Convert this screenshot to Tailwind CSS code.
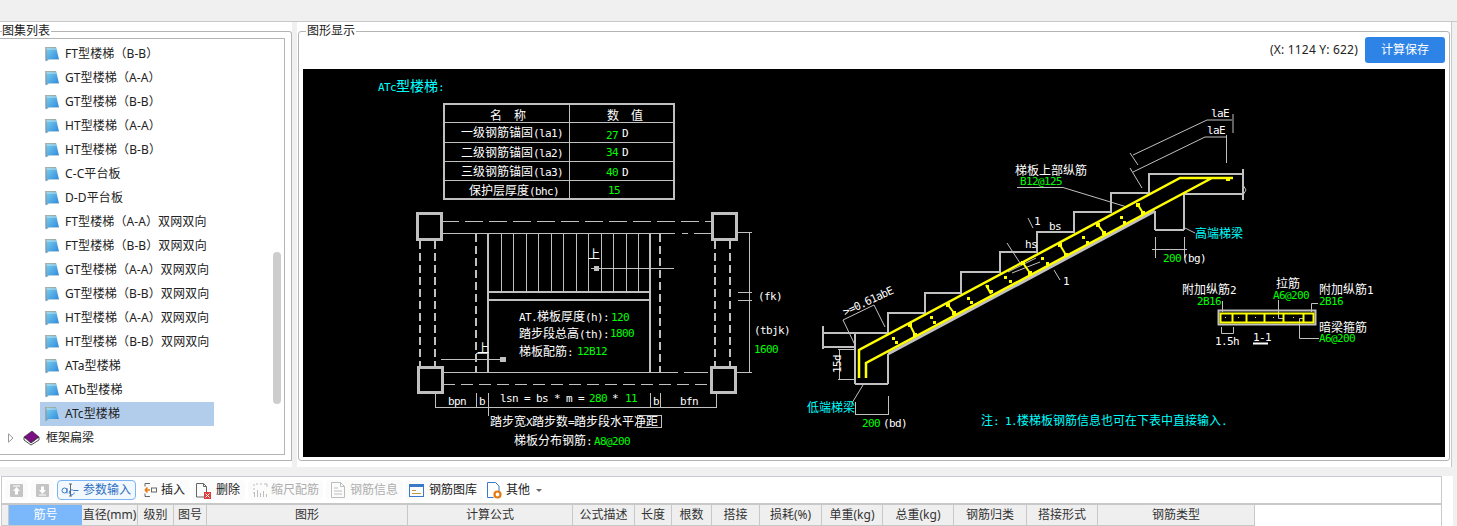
<!DOCTYPE html>
<html lang="zh-CN">
<head>
    <meta charset="UTF-8">
    <title>图形显示</title>
    <script src="https://cdn.jsdelivr.net/npm/@tailwindcss/browser@4"></script>
</head>
<body class="w-[1457px] h-[526px] overflow-hidden bg-[#f0f0f0] text-[12px] text-[#222] font-['Noto_Sans','Noto_Sans_CJK_SC',sans-serif]">
    <!-- shared icons -->
    <svg class="absolute w-0 h-0">
        <defs>
            <linearGradient id="noteFill" x1="0" y1="0" x2="1" y2="1">
                <stop offset="0" stop-color="#7fd4ee"/>
                <stop offset="1" stop-color="#2a86dc"/>
            </linearGradient>
        </defs>
        <symbol id="note" viewBox="0 0 15 16">
            <path d="M1 1h10l.8 3 2.200 9.500H4L1 15z" fill="url(#noteFill)"/>
            <path d="M1 1v14" stroke="#8a9aa2" stroke-width="1.400"/>
            <path d="M1 1.500h10" stroke="#b9a77c" stroke-width="1" stroke-dasharray="1 .6"/>
            <path d="M1 3h10.300" stroke="#d8e6ea" stroke-width=".8"/>
            <path d="M1.500 15l2.500-1.500h10" stroke="#b4d0de" fill="none"/>
        </symbol>
    </svg>

    <div class="h-[21px]"></div>

    <div class="flex h-[446px] border-t border-[#c8c8c8]">
        <!-- left panel -->
        <div class="relative w-[292px] bg-white pt-[9px]">
            <span class="absolute left-[2px] top-[1px] bg-white pr-px text-[12px] leading-[16px]">图集列表</span>
            <div class="h-[430px] border border-l-0 border-[#b4b4b4] rounded-tr-[3px] pt-[6px] pr-[6px]">
                <div class="relative h-[417px] border border-l-0 border-[#b4b4b4] pt-[3px]" id="tree">
                    <div class="absolute left-[273px] top-[213px] w-[8px] h-[152px] rounded-[4px] bg-[#cdcdcd]"></div>
                </div>
            </div>
        </div>

        <!-- right panel -->
        <div class="w-[5px]"></div>
        <div class="relative w-[1155px] bg-white border-r border-[#c8c8c8] pt-[9px] pl-px">
            <span class="absolute left-[9px] top-px bg-white px-px text-[12px] leading-[16px]">图形显示</span>
            <div class="w-[1152px] h-[430px] border border-[#b4b4b4] rounded-[3px] pt-[5px] px-[4px]">
                <div class="flex items-center justify-end h-[26px] gap-[7px]">
                    <span class="text-[12px] tracking-[.2px]">(X: 1124 Y: 622)</span>
                    <button class="w-[80px] h-[26px] rounded-[3px] bg-[#2e84e6] text-white text-[12px]">计算保存</button>
                </div>
                <div class="mt-[6px]">
                    <svg id="cad" class="block" width="1142" height="388" viewBox="303 69 1142 388" style="background:#000" font-family="'DejaVu Sans Mono','Noto Sans CJK SC',monospace" font-size="10">
                        <g fill="none" stroke="#c0c0c0" stroke-width="1" shape-rendering="crispEdges">
                            <!-- table -->
                            <rect x="444" y="103.500" width="230" height="95.500" stroke-width="2"/>
                            <path d="M569.500 103v96M444 122.500h230M444 142.500h230M444 161.500h230M444 180.500h230"/>
                            <!-- columns -->
                            <g stroke-width="3">
                                <rect x="417" y="213" width="24" height="26"/>
                                <rect x="712" y="213" width="24" height="26"/>
                                <rect x="418" y="367" width="24" height="25"/>
                                <rect x="711" y="367" width="24" height="25"/>
                            </g>
                            <g stroke-width="2" stroke-dasharray="8 4">
                                <path d="M420 241v125M435 241v125M715 241v125M730 241v125M476 234v138M660 234v138"/>
                            </g>
                            <path d="M441 221.500h270" stroke-dasharray="18 6"/>
                            <path d="M441 233.500h234M682 233.500h6M694 233.500h17M443 372.500h235M684 372.500h24"/>
                            <path d="M443 384.500h266" stroke-dasharray="12 6"/>
                            <path d="M488 233v139M650 233v139" stroke-width="2"/>
                            <path d="M501.500 233v59M513.500 233v59M526 233v59M538.500 233v59M551 233v59M563.500 233v59M576 233v59M588.500 233v59M601 233v59M613.500 233v59M626 233v59M638.500 233v59"/>
                            <path d="M488 292h162M488 300h162" stroke-width="2"/>
                            <path d="M591 268.500h83M441 359.500h64M476 353.500h12"/>
                            <!-- plan dimensions -->
                            <path d="M435 407.500h282M435.500 393v15M476.500 393v15M488.500 393v23M650.500 393v15M660.500 393v15M716.500 393v15" />
                            <path d="M749.500 232v140M738 292.500h14M738 300.500h14M736 372.500h16M736 232.500h16"/>
                            <rect x="637.500" y="415.500" width="24" height="12"/>
                            <!-- section outline -->
                            <path d="M823 332.500h65v-20h37v-20h36v-21h39v-19.500h37v-20h37v-20h37v-19h38v-19.500h94" stroke-width="2"/>
                            <path d="M1243 169v31M1184 194h59M1184 194v36M1155 230h29M1155 211v19M888 354v30M855 384h33M855 332v52M823 347h32M823 326v23" stroke-width="2"/>
                            <path d="M1155 211L888 354" stroke-width="3" shape-rendering="auto"/>
                        </g>
                        <!-- thin leaders -->
                        <g fill="none" stroke="#c0c0c0" stroke-width="1">
                            <path d="M1133 155L1207 120H1232M1233 114V133M1133 172L1205 137H1226M1226.500 135V163M1130 153L1138 165M1130 168L1142 188"/>
                            <path d="M1017 187.500H1063L1127 207M1028 218L1033 228M1007 243L1020 263M1012 273L1040 262M1008 272L1036 258M1183 227L1195 233"/>
                            <path d="M1155.500 237V258M1184.500 237V258M1152 249.500H1187"/>
                            <path d="M1243 185l3 5-3 5"/>
                            <path d="M843 320L874 305L885 327M843 320L855 345M839.500 349V379M838 349.500H855M838 379.500H855M863 385L852 403M855.500 402V415M888.500 396V415M855 414.500H888"/>
                            <path d="M1054 270l6 10"/>
                            <path d="M1222.500 301V312M1318 303.500H1311.500V312M1278.500 300V318.500H1283M1319 338.500H1299.500V318.500H1303M1221.500 327V333.500H1233.500V327"/>
                            <rect x="1218.500" y="310.500" width="97" height="14" stroke-width="2"/>
                        </g>
                        <!-- rebar -->
                        <g fill="none" stroke="#ffff00" stroke-width="2">
                            <path d="M859 378V350L1180 178H1233M866 378V363L1212 178" stroke-width="2.500"/>
                            <path d="M910 325l5 10M948 305l6 8M986 285l5 9M1023 263l7 10M1060 245l6 10M1098 225l6 8M1138 205l5 8"/>
                            <rect x="1220.500" y="313.500" width="93" height="9"/>
                            <path d="M1232.500 313v10M1246.500 313v10M1264.500 313v10M1283.500 313v10M1303.500 313v10"/>
                        </g>
                        <g fill="#ffff00">
                            <rect x="892" y="337" width="3" height="3"/><rect x="895" y="341" width="3" height="3"/>
                            <rect x="930" y="316" width="3" height="3"/><rect x="933" y="321" width="3" height="3"/>
                            <rect x="967" y="297" width="3" height="3"/><rect x="970" y="301" width="3" height="3"/>
                            <rect x="986" y="285" width="3" height="3"/><rect x="990" y="290" width="3" height="3"/>
                            <rect x="1004" y="276" width="3" height="3"/><rect x="1009" y="280" width="3" height="3"/>
                            <rect x="1041" y="257" width="3" height="3"/><rect x="1046" y="262" width="3" height="3"/>
                            <rect x="1082" y="236" width="3" height="3"/><rect x="1086" y="241" width="3" height="3"/>
                            <rect x="1120" y="216" width="3" height="3"/><rect x="1123" y="221" width="3" height="3"/>
                            <!-- stirrup ends -->
                            <rect x="908" y="323" width="4" height="4"/><rect x="913" y="333" width="4" height="4"/>
                            <rect x="946" y="303" width="4" height="4"/><rect x="952" y="311" width="4" height="4"/>
                            <rect x="1021" y="261" width="4" height="4"/><rect x="1028" y="271" width="4" height="4"/>
                            <rect x="1058" y="243" width="4" height="4"/><rect x="1064" y="253" width="4" height="4"/>
                            <rect x="1096" y="223" width="4" height="4"/><rect x="1102" y="231" width="4" height="4"/>
                            <rect x="1136" y="203" width="4" height="4"/><rect x="1141" y="211" width="4" height="4"/>
                            <rect x="1226" y="178" width="4" height="3"/>
                            <!-- section dots -->
                            <rect x="1238" y="317" width="1" height="1"/><rect x="1255" y="317" width="1" height="1"/><rect x="1273" y="317" width="1" height="1"/><rect x="1293" y="317" width="1" height="1"/><rect x="1225" y="317" width="1" height="1"/>
                        </g>
                        <!-- arrow heads -->
                        <g fill="#c0c0c0"><rect x="594" y="266" width="5" height="5"/><rect x="500" y="357" width="6" height="5"/></g>

                        <!-- labels, the script sizes the runs -->
                        <g fill="#00ffff">
                            <text x="378" y="91" data-cjk="14">ATc型楼梯:</text>
                            <text x="1195" y="238">高端梯梁</text>
                            <text x="807" y="412">低端梯梁</text>
                            <text x="981" y="425">注: 1.楼梯板钢筋信息也可在下表中直接输入.</text>
                        </g>
                        <g fill="#ffffff">
                            <text x="490" y="120">名　称</text>
                            <text x="607" y="120">数　值</text>
                            <text x="461" y="137">一级钢筋锚固(la1)</text>
                            <text x="461" y="157">二级钢筋锚固(la2)</text>
                            <text x="461" y="176">三级钢筋锚固(la3)</text>
                            <text x="469" y="195">保护层厚度(bhc)</text>
                            <text x="622" y="137">D</text>
                            <text x="622" y="156">D</text>
                            <text x="622" y="176">D</text>
                            <text x="588" y="259">上</text>
                            <text x="477" y="353">上</text>
                            <text x="519" y="321">AT.梯板厚度(h):</text>
                            <text x="519" y="338">踏步段总高(th):</text>
                            <text x="519" y="356">梯板配筋:</text>
                            <text x="448" y="405">bpn</text>
                            <text x="479" y="405">b</text>
                            <text x="500" y="402">lsn = bs * m =</text>
                            <text x="612" y="402">*</text>
                            <text x="653" y="405">b</text>
                            <text x="680" y="405">bfn</text>
                            <text x="758" y="300">(fk)</text>
                            <text x="754" y="334">(tbjk)</text>
                            <text x="490" y="426">踏步宽X踏步数=踏步段水平净距</text>
                            <text x="514" y="445">梯板分布钢筋:</text>
                            <text x="1211" y="117">laE</text>
                            <text x="1207" y="134">laE</text>
                            <text x="1015" y="175">梯板上部纵筋</text>
                            <text x="1049" y="230">bs</text>
                            <text x="1025" y="248">hs</text>
                            <text x="1182" y="262">(bg)</text>
                            <text x="883" y="427">(bd)</text>
                            <text x="1182" y="294">附加纵筋2</text>
                            <text x="1276" y="288">拉筋</text>
                            <text x="1319" y="294">附加纵筋1</text>
                            <text x="1319" y="332">暗梁箍筋</text>
                            <text x="1215" y="345">1.5h</text>
                            <text x="1253" y="341">1-1</text>
                            <text x="1034" y="225">1</text>
                            <text x="1063" y="285">1</text>
                            <text transform="translate(845 316) rotate(-25)">&gt;=0.61abE</text>
                            <text transform="translate(841 373) rotate(-90)">15d</text>
                        </g>
                        <path d="M1253 343.500h15" stroke="#fff" stroke-width="2"/>
                        <g fill="#00ff00">
                            <text x="606" y="139">27</text>
                            <text x="606" y="156">34</text>
                            <text x="606" y="176">40</text>
                            <text x="608" y="194">15</text>
                            <text x="611" y="321">120</text>
                            <text x="610" y="337">1800</text>
                            <text x="577" y="355">12B12</text>
                            <text x="589" y="402">280</text>
                            <text x="625" y="402">11</text>
                            <text x="754" y="353">1600</text>
                            <text x="594" y="445">A8@200</text>
                            <text x="1020" y="185">B12@125</text>
                            <text x="1163" y="262">200</text>
                            <text x="862" y="427">200</text>
                            <text x="1197" y="305">2B16</text>
                            <text x="1273" y="299">A6@200</text>
                            <text x="1319" y="305">2B16</text>
                            <text x="1319" y="342">A6@200</text>
                        </g>
                    </svg>
                </div>
            </div>
        </div>
    </div>

    <div class="h-[9px]"></div>

    <!-- bottom grid -->
    <div class="w-[1453px] h-[50px] bg-white">
        <div class="w-[1441px] h-[50px] ml-px border border-b-0 border-[#c9c9d2]">
            <div class="flex items-center h-[28px] pb-0 border-b-[2px] border-[#c8c8c8] pl-[3px] gap-[3px]">
                <div class="flex items-center w-[23px] h-[20px] rounded-[4px] bg-[#fbfbfb] pl-[5px]">
                    <svg width="13" height="13" viewBox="0 0 13 13"><rect width="13" height="13" rx="1" fill="#c4c4c4"/><path d="M6.500 3L3 7h2v3.500h3V7h2z" fill="#fff"/><rect x="3" y="1.500" width="7" height="1" fill="#fff"/></svg>
                </div>
                <div class="flex items-center w-[23px] h-[20px] rounded-[4px] bg-[#fbfbfb] pl-[5px]">
                    <svg width="13" height="13" viewBox="0 0 13 13"><rect width="13" height="13" rx="1" fill="#c4c4c4"/><path d="M6.500 10L3 6h2V2.500h3V6h2z" fill="#fff"/><rect x="3" y="10.500" width="7" height="1" fill="#fff"/></svg>
                </div>
                <div class="flex items-center w-[79px] h-[20px] rounded-[4px] border border-[#7db4f5] bg-[#f2f8ff] text-[#2f6fc0] pl-[3px]">
                    <svg width="19" height="14" viewBox="0 0 19 14" fill="none" stroke="#3b78c4"><circle cx="3.500" cy="7.500" r="2.500"/><path d="M6 5v5.500"/><path d="M8 1h3M8 13h3M9.500 1v12" stroke="#666"/><path d="M17.500 7.500h-5a2.500 2.500 0 1 0 .8 2"/></svg>
                    <span class="ml-[3px] whitespace-nowrap">参数输入</span>
                </div>
                <div class="ml-px flex items-center w-[50px] h-[20px] rounded-[4px] bg-[#fbfbfb] pl-[4px]">
                    <svg width="13" height="16" viewBox="0 0 13 16" fill="none"><path d="M1 1.500h5M1 14.500h5M1 1.500v3M1 11.500v3" stroke="#666"/><path d="M1 8h5M1 8l2.500-2.500M1 8l2.500 2.500" stroke="#e8790f" stroke-width="1.500"/><rect x="7.500" y="6" width="5" height="4" stroke="#666"/></svg>
                    <span class="ml-[4px] whitespace-nowrap">插入</span>
                </div>
                <div class="flex items-center w-[52px] h-[20px] rounded-[4px] bg-[#fbfbfb] pl-[3px]">
                    <svg width="15" height="17" viewBox="0 0 15 17" fill="none"><path d="M.5 1.500h7l3 3V15h-10z" stroke="#666"/><path d="M7.500 1.500v3h3" stroke="#666"/><rect x="8" y="10" width="7" height="7" fill="#e03c3c"/><path d="M9.500 11.500l4 4M13.500 11.500l-4 4" stroke="#fff"/></svg>
                    <span class="ml-[5px] whitespace-nowrap">删除</span>
                </div>
                <div class="flex items-center w-[75px] h-[20px] rounded-[4px] bg-[#fbfbfb] pl-[5px] text-[#aeaeae]">
                    <svg width="15" height="15" viewBox="0 0 15 15" fill="none" stroke="#bdbdbd"><path d="M1 1v2M1 5v2M1 9v2M3 1h2M7 1h2M11 1h3M14 1v3"/><path d="M1.500 14V9M4.500 14V7M7.500 14v-4M10.500 14V8M13.500 14v-3"/></svg>
                    <span class="ml-[3px] whitespace-nowrap">缩尺配筋</span>
                </div>
                <div class="flex items-center w-[77px] h-[20px] rounded-[4px] bg-[#fbfbfb] pl-[5px] text-[#aeaeae]">
                    <svg width="14" height="16" viewBox="0 0 14 16" fill="none" stroke="#bdbdbd"><path d="M.5.500h9l4 4V15.500H.5z"/><path d="M9.500.500v4h4M3 6h4M3 9h8M3 12h8"/></svg>
                    <span class="ml-[5px] whitespace-nowrap">钢筋信息</span>
                </div>
                <div class="-ml-px flex items-center w-[77px] h-[20px] rounded-[4px] bg-[#fbfbfb] pl-[4px]">
                    <svg width="15" height="13" viewBox="0 0 15 13" fill="none"><rect x=".5" y=".5" width="14" height="12" stroke="#3a78c9"/><rect width="15" height="3" fill="#3a78c9"/><path d="M3 6.500h4M3 9.500h9" stroke="#c59a4a"/></svg>
                    <span class="ml-[5px] whitespace-nowrap">钢筋图库</span>
                </div>
                <div class="-ml-px flex items-center h-[20px] pl-[3px]">
                    <svg width="15" height="17" viewBox="0 0 15 17" fill="none"><path d="M.5.500h8l3.500 3.500v5M.5.500V15.500h6" stroke="#3a78c9"/><circle cx="10.500" cy="12.500" r="3" stroke="#e8790f" stroke-width="2.200"/></svg>
                    <span class="ml-[4px] whitespace-nowrap">其他</span>
                    <span class="ml-[6px] w-0 h-0 border-x-[3px] border-x-transparent border-t-[3px] border-t-[#666]"></span>
                </div>
            </div>
            <div id="head" class="flex h-[21px] text-[#333]"></div>
        </div>
    </div>

    <script>
        const rows = ['FT型楼梯（B-B）','GT型楼梯（A-A）','GT型楼梯（B-B）','HT型楼梯（A-A）','HT型楼梯（B-B）','C-C平台板','D-D平台板',
            'FT型楼梯（A-A）双网双向','FT型楼梯（B-B）双网双向','GT型楼梯（A-A）双网双向','GT型楼梯（B-B）双网双向','HT型楼梯（A-A）双网双向','HT型楼梯（B-B）双网双向',
            'ATa型楼梯','ATb型楼梯','ATc型楼梯'];
        const tree = document.getElementById('tree');
        rows.forEach((name) => {
            const on = name === 'ATc型楼梯';
            const row = document.createElement('div');
            row.className = 'flex items-center h-[24px] ml-[40px] w-[174px]' + (on ? ' bg-[#b2cdec]' : '');
            row.innerHTML = `<svg class="ml-[5px]" width="15" height="16"><use href="#note"/></svg><span class="ml-[5px] tracking-[.1px] whitespace-nowrap">${name}</span>`;
            tree.appendChild(row);
        });
        const last = document.createElement('div');
        last.className = 'flex items-center h-[24px]';
        last.innerHTML = `<svg class="ml-[8px]" width="6" height="10" viewBox="0 0 6 10"><path d="M.5.800L5 5 .5 9.200z" fill="#fff" stroke="#9a9a9a"/></svg>
            <svg class="ml-[9px]" width="17" height="15" viewBox="0 0 17 15"><path d="M1 6l8-6 7 6-8 6z" fill="#7d0f86" stroke="#222" stroke-width=".6"/><path d="M1 6v3l7 5 8-5V6l-8 6z" fill="#fff" stroke="#222" stroke-width=".8"/></svg>
            <span class="ml-[6px]">框架扁梁</span>`;
        tree.appendChild(last);

        const cols = [['',7],['筋号',73],['直径(mm)',56],['级别',36],['图号',33],['图形',201],['计算公式',165],['公式描述',62],['长度',37],['根数',40],['搭接',48],['损耗(%)',62],['单重(kg)',61],['总重(kg)',71],['钢筋归类',73],['搭接形式',71],['钢筋类型',157]];
        const head = document.getElementById('head');
        cols.forEach(([t, w]) => {
            const c = document.createElement('div');
            c.className = t === '筋号'
                ? 'flex items-center justify-center shrink-0 bg-[#7ab7fb] text-white border-b border-[#c8c8c8]'
                : 'flex items-center justify-center shrink-0 bg-[#efefef] border-r border-b border-[#c8c8c8] whitespace-nowrap';
            c.style.width = w + 'px';
            c.textContent = t;
            head.appendChild(c);
        });

        // CAD text: latin runs are squeezed to the 6px pitch, CJK runs are 12px
        document.querySelectorAll('#cad text').forEach((t) => {
            const size = t.dataset.cjk || '12';
            const parts = t.textContent.split(/([\u3000\u4e00-\u9fff]+)/).filter(Boolean);
            t.textContent = '';
            parts.forEach((p) => {
                const span = document.createElementNS('http://www.w3.org/2000/svg', 'tspan');
                if (/[\u3000\u4e00-\u9fff]/.test(p)) {
                    span.setAttribute('font-size', size);
                } else {
                    span.setAttribute('font-size', '11');
                    span.setAttribute('letter-spacing', '-.62');
                }
                span.textContent = p;
                t.appendChild(span);
            });
        });
    </script>
</body>
</html>
